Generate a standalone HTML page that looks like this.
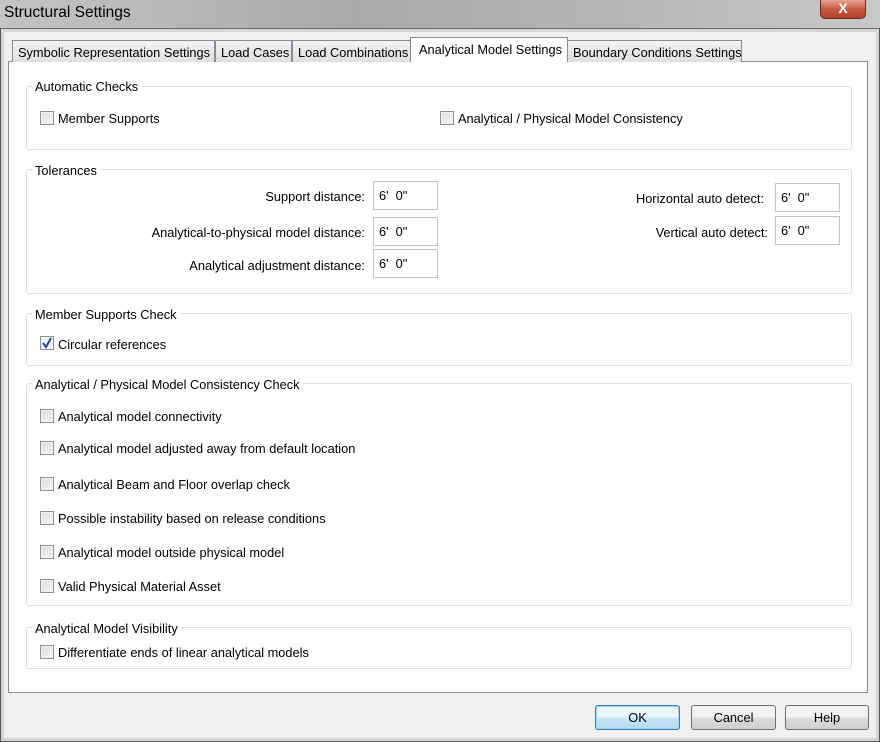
<html><head><style>
*{margin:0;padding:0;box-sizing:border-box}
body{width:880px;height:742px;overflow:hidden;background:#f0f0f0;font-family:"Liberation Sans",sans-serif;font-size:12.8px;color:#000;position:relative}
.a{position:absolute;white-space:nowrap}
.t{position:absolute;white-space:nowrap;font-size:12.8px;margin-top:1px}
.title{left:0;top:0;width:880px;height:30px;background:linear-gradient(90deg,#c4c4c4,#a9a9a9 40%,#b5b5b5 70%,#c8c8c8)}
.frame{left:0;top:28px;width:880px;height:714px;border:1px solid #555;border-top:1px solid #666;box-shadow:inset 0 0 0 3px #d6d6d6,inset 0 0 0 4px #888}
.panel{left:8px;top:61px;width:860px;height:632px;background:#fff;border:1px solid #898c95}
.tab{top:40px;height:22px;border:1px solid #898c95;border-bottom:none;background:linear-gradient(#f2f2f2,#e0e0e0);padding:4px 4px 0 5px;font-size:12.8px}
.sel{top:37px;height:25px;background:#fff;z-index:2}
.grp{border:1px solid #d5dfe5;border-radius:3px}
.gl{background:#fff;padding:0 3px;font-size:12.8px;margin-top:1px}
.cb{width:14px;height:14px;border:1px solid #8f8f8f;background:linear-gradient(135deg,#dcdcdc,#f6f6f6);box-shadow:inset 0 0 0 1px #f4f4f4}
.in{width:65px;height:29px;border:1px solid #c5c5c5;background:#fff;padding:6px 0 0 5px;font-size:12.8px}
.btn{top:705px;height:25px;border:1px solid #707070;border-radius:3px;background:linear-gradient(#f2f2f2 50%,#dcdcdc 50%,#cfcfcf);text-align:center;line-height:24px;font-size:12.8px}
</style></head><body>
<div class="a title"></div>
<div class="a" style="left:4px;top:4px;font-size:15.5px">Structural Settings</div>
<div class="a" style="left:820px;top:0;width:46px;height:19px;border:1px solid #6b2b22;border-top:none;border-radius:0 0 5px 5px;background:linear-gradient(#e8a592,#c75a43 50%,#b8402a);color:#fff;font-weight:bold;font-size:14px;text-align:center;line-height:17px">X</div>
<div class="a frame"></div>
<div class="a" style="left:4px;top:32px;width:872px;height:706px;background:#f0f0f0"></div>
<div class="a panel"></div>
<div class="a tab" style="left:12px;width:203px">Symbolic Representation Settings</div>
<div class="a tab" style="left:215px;width:77px">Load Cases</div>
<div class="a tab" style="left:292px;width:119px">Load Combinations</div>
<div class="a tab sel" style="left:410px;width:158px;padding-left:8px">Analytical Model Settings</div>
<div class="a tab" style="left:567px;width:175px">Boundary Conditions Settings</div>

<div class="a grp" style="left:26px;top:86px;width:826px;height:64px"></div>
<div class="a gl" style="left:32px;top:78px">Automatic Checks</div>
<div class="a cb" style="left:40px;top:111px"></div><div class="t" style="left:58px;top:110px">Member Supports</div>
<div class="a cb" style="left:440px;top:111px"></div><div class="t" style="left:458px;top:110px">Analytical / Physical Model Consistency</div>

<div class="a grp" style="left:26px;top:169px;width:826px;height:125px"></div>
<div class="a gl" style="left:32px;top:162px">Tolerances</div>
<div class="t" style="right:515px;top:188px">Support distance:</div>
<div class="a in" style="left:373px;top:181px">6'&nbsp; 0"</div>
<div class="t" style="right:515px;top:224px">Analytical-to-physical model distance:</div>
<div class="a in" style="left:373px;top:217px">6'&nbsp; 0"</div>
<div class="t" style="right:515px;top:257px">Analytical adjustment distance:</div>
<div class="a in" style="left:373px;top:249px">6'&nbsp; 0"</div>
<div class="t" style="right:116px;top:190px">Horizontal auto detect:</div>
<div class="a in" style="left:775px;top:183px">6'&nbsp; 0"</div>
<div class="t" style="right:112px;top:224px">Vertical auto detect:</div>
<div class="a in" style="left:775px;top:216px">6'&nbsp; 0"</div>

<div class="a grp" style="left:26px;top:313px;width:826px;height:53px"></div>
<div class="a gl" style="left:32px;top:306px">Member Supports Check</div>
<div class="a cb" style="left:40px;top:336px;background:#eef0f4"></div>
<svg class="a" style="left:40px;top:336px" width="14" height="14"><path d="M3 7 L6 11 L11 2" stroke="#2c4a9c" stroke-width="2" fill="none"/></svg>
<div class="t" style="left:58px;top:336px">Circular references</div>

<div class="a grp" style="left:26px;top:383px;width:826px;height:223px"></div>
<div class="a gl" style="left:32px;top:376px">Analytical / Physical Model Consistency Check</div>
<div class="a cb" style="left:40px;top:409px"></div><div class="t" style="left:58px;top:408px">Analytical model connectivity</div>
<div class="a cb" style="left:40px;top:441px"></div><div class="t" style="left:58px;top:440px">Analytical model adjusted away from default location</div>
<div class="a cb" style="left:40px;top:477px"></div><div class="t" style="left:58px;top:476px">Analytical Beam and Floor overlap check</div>
<div class="a cb" style="left:40px;top:511px"></div><div class="t" style="left:58px;top:510px">Possible instability based on release conditions</div>
<div class="a cb" style="left:40px;top:545px"></div><div class="t" style="left:58px;top:544px">Analytical model outside physical model</div>
<div class="a cb" style="left:40px;top:579px"></div><div class="t" style="left:58px;top:578px">Valid Physical Material Asset</div>

<div class="a grp" style="left:26px;top:627px;width:826px;height:42px"></div>
<div class="a gl" style="left:32px;top:620px">Analytical Model Visibility</div>
<div class="a cb" style="left:40px;top:645px"></div><div class="t" style="left:58px;top:644px">Differentiate ends of linear analytical models</div>

<div class="a btn" style="left:595px;width:85px;border-color:#3c7fb1;background:linear-gradient(#eaf6fd 50%,#c4e5f6 50%,#b6dcf2);box-shadow:inset 0 0 0 1px #9fd5f5">OK</div>
<div class="a btn" style="left:691px;width:85px">Cancel</div>
<div class="a btn" style="left:785px;width:84px">Help</div>
</body></html>
